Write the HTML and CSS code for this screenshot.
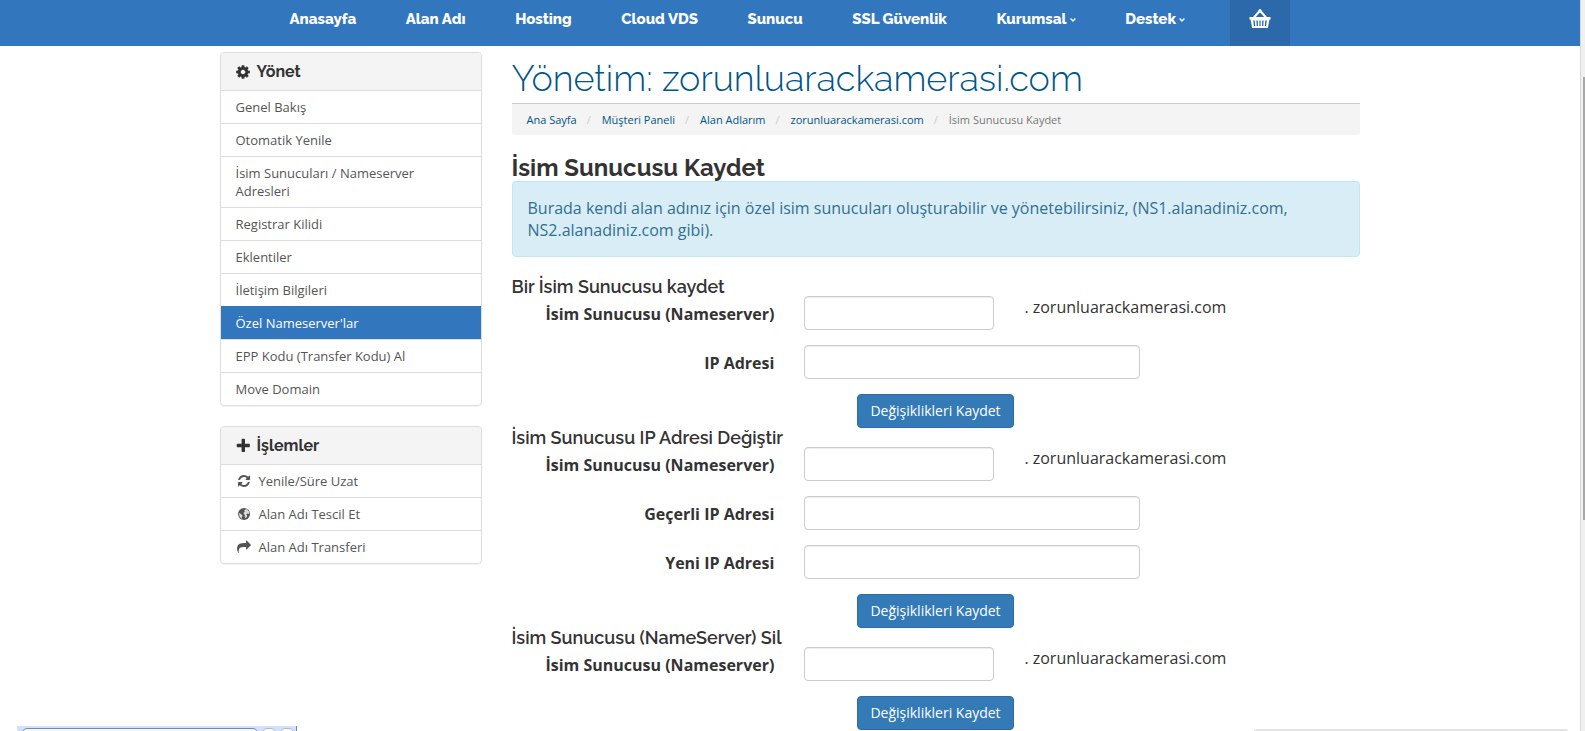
FILE: index.html
```html
<!DOCTYPE html>
<html lang="tr">
<head>
    <meta charset="UTF-8">
    <meta name="viewport" content="width=device-width, initial-scale=1.0">
    <title>İsim Sunucusu Kaydet</title>
    <link rel="stylesheet" href="styles.css">
</head>
<body>
    <header class="navbar">
        <div class="container navbar-container">
            <nav class="navbar-menu">
                <a href="#">Anasayfa</a>
                <a href="#">Alan Adı</a>
                <a href="#">Hosting</a>
                <a href="#">Cloud VDS</a>
                <a href="#">Sunucu</a>
                <a href="#">SSL Güvenlik</a>
                <a href="#">Kurumsal <svg class="caret" viewBox="0 0 6 4"><path d="M.6 .6L3 3l2.400-2.400"/></svg></a>
                <a href="#">Destek <svg class="caret" viewBox="0 0 6 4"><path d="M.6 .6L3 3l2.400-2.400"/></svg></a>
            </nav>
            <a href="#" class="navbar-cart" aria-label="Sepet">
                <svg viewBox="0 0 22 20">
                    <path d="M5 8.500L11 1.500l6 7" fill="none" stroke="#fff" stroke-width="2"/>
                    <circle cx="11" cy="2" r="1.700"/>
                    <path fill-rule="evenodd" d="M0.500 8h21v2.400h-1l-1.700 8.600H3.200L1.500 10.400h-1zM4.200 11.500l.8 5.500h1.200l-.5-5.500zM7.400 11.500l.3 5.500h1.300l-.2-5.500zM10.400 11.500v5.500h1.200v-5.500zM13.200 11.500l-.2 5.500h1.300l.3-5.500zM16.300 11.500l-.5 5.500H17l.8-5.500z"/>
                </svg>
            </a>
        </div>
    </header>

    <div class="page">
        <div class="container content">
            <aside class="sidebar">
                <div class="panel">
                    <h3 class="panel-heading">
                        <svg class="icon" viewBox="0 0 1792 1792"><path d="M1152 896q0-106-75-181t-181-75-181 75-75 181 75 181 181 75 181-75 75-181zm512-109v222q0 12-8 23t-20 13l-185 28q-19 54-39 91 35 50 107 138 10 12 10 25t-9 23q-27 37-99 108t-94 71q-12 0-26-9l-138-108q-44 23-91 38-16 136-29 186-7 28-36 28h-222q-14 0-24.500-8.500t-11.500-21.500l-28-184q-49-16-90-37l-141 107q-10 9-25 9-14 0-25-11-126-114-165-168-7-10-7-23 0-12 8-23 15-21 51-66.500t54-70.500q-27-50-41-99l-183-27q-13-2-21-12.500t-8-23.500v-222q0-12 8-23t19-13l186-28q14-46 39-92-40-57-107-138-10-12-10-24 0-10 9-23 26-36 98.500-107.500t94.500-71.500q13 0 26 10l138 107q44-23 91-38 16-136 29-186 7-28 36-28h222q14 0 24.500 8.500t11.500 21.500l28 184q49 16 90 37l142-107q9-9 24-9 13 0 25 10 129 119 165 170 7 8 7 22 0 12-8 23-15 21-51 66.500t-54 70.500q26 50 41 98l183 28q13 2 21 12.500t8 23.500z"/></svg>
                        Yönet
                    </h3>
                    <a href="#">Genel Bakış</a>
                    <a href="#">Otomatik Yenile</a>
                    <a href="#">İsim Sunucuları / Nameserver Adresleri</a>
                    <a href="#">Registrar Kilidi</a>
                    <a href="#">Eklentiler</a>
                    <a href="#">İletişim Bilgileri</a>
                    <a href="#" class="active">Özel Nameserver'lar</a>
                    <a href="#">EPP Kodu (Transfer Kodu) Al</a>
                    <a href="#">Move Domain</a>
                </div>

                <div class="panel">
                    <h3 class="panel-heading">
                        <svg class="icon" viewBox="0 0 1792 1792"><path d="M1664 736v192q0 40-28 68t-68 28h-448v448q0 40-28 68t-68 28h-192q-40 0-68-28t-28-68v-448h-448q-40 0-68-28t-28-68v-192q0-40 28-68t68-28h448v-448q0-40 28-68t68-28h192q40 0 68 28t28 68v448h448q40 0 68 28t28 68z"/></svg>
                        İşlemler
                    </h3>
                    <a href="#">
                        <svg class="icon icon-fw" viewBox="0 0 1792 1792"><path d="M1639 1056q0 5-1 7-64 268-268 434.500t-478 166.500q-146 0-282.500-55t-243.500-157l-129 129q-19 19-45 19t-45-19-19-45v-448q0-26 19-45t45-19h448q26 0 45 19t19 45-19 45l-137 137q71 66 161 102t187 36q134 0 250-65t186-179q11-17 53-117 8-23 30-23h192q13 0 22.500 9.500t9.500 22.500zm25-800v448q0 26-19 45t-45 19h-448q-26 0-45-19t-19-45 19-45l138-138q-148-137-349-137-134 0-250 65t-186 179q-11 17-53 117-8 23-30 23h-199q-13 0-22.500-9.500t-9.500-22.500v-7q65-268 270-434.500t480-166.500q146 0 284 55.500t245 156.500l130-129q19-19 45-19t45 19 19 45z"/></svg>
                        Yenile/Süre Uzat
                    </a>
                    <a href="#">
                        <svg class="icon icon-fw" viewBox="0 0 14 14"><circle cx="7" cy="7" r="6"/><path class="land" d="M8 2.400l1.900-.2 1.700 1.700.7 2-.6 1.200-1.300-.6-1.200.9 1 1.200-.5 1.600-1.300 1-.7-1.600.2-1.500-1.300-1 .2-1.500 1.300-.8-1-.7zM2 6l1.500.8 1.500 1.100.6 1.100-.9 1.100.2 1.600-1.500-1-1.200-2.200z"/></svg>
                        Alan Adı Tescil Et
                    </a>
                    <a href="#">
                        <svg class="icon icon-fw" viewBox="0 0 1792 1792"><path d="M1792 640q0 26-19 45l-512 512q-19 19-45 19t-45-19-19-45v-256h-224q-98 0-175.500 6t-154 21.500-133 42.500-105.500 69.500-80 101-48.500 138.500-17.500 181q0 55 5 123 0 6 2.500 23.500t2.500 26.500q0 15-8.500 25t-23.500 10q-16 0-28-17-7-9-13-22t-13.500-30-10.500-24q-127-285-127-451 0-199 53-333 162-403 875-403h224v-256q0-26 19-45t45-19 45 19l512 512q19 19 19 45z"/></svg>
                        Alan Adı Transferi
                    </a>
                </div>
            </aside>

            <main class="main">
                <h1>Yönetim: zorunluarackamerasi.com</h1>
                <ol class="breadcrumb">
                    <li><a href="#">Ana Sayfa</a></li>
                    <li><a href="#">Müşteri Paneli</a></li>
                    <li><a href="#">Alan Adlarım</a></li>
                    <li><a href="#">zorunluarackamerasi.com</a></li>
                    <li>İsim Sunucusu Kaydet</li>
                </ol>

                <h2>İsim Sunucusu Kaydet</h2>
                <div class="alert">Burada kendi alan adınız için özel isim sunucuları oluşturabilir ve yönetebilirsiniz, (NS1.alanadiniz.com, NS2.alanadiniz.com gibi).</div>

                <form>
                    <h4>Bir İsim Sunucusu kaydet</h4>
                    <div class="form-group">
                        <label for="regNs">İsim Sunucusu (Nameserver)</label>
                        <input type="text" id="regNs" class="short">
                        <span>. zorunluarackamerasi.com</span>
                    </div>
                    <div class="form-group">
                        <label for="regIp">IP Adresi</label>
                        <input type="text" id="regIp">
                    </div>
                    <div class="form-actions">
                        <button type="submit" class="btn">Değişiklikleri Kaydet</button>
                    </div>
                </form>

                <form>
                    <h4>İsim Sunucusu IP Adresi Değiştir</h4>
                    <div class="form-group">
                        <label for="modNs">İsim Sunucusu (Nameserver)</label>
                        <input type="text" id="modNs" class="short">
                        <span>. zorunluarackamerasi.com</span>
                    </div>
                    <div class="form-group">
                        <label for="modIp">Geçerli IP Adresi</label>
                        <input type="text" id="modIp">
                    </div>
                    <div class="form-group">
                        <label for="newIp">Yeni IP Adresi</label>
                        <input type="text" id="newIp">
                    </div>
                    <div class="form-actions">
                        <button type="submit" class="btn">Değişiklikleri Kaydet</button>
                    </div>
                </form>

                <form>
                    <h4>İsim Sunucusu (NameServer) Sil</h4>
                    <div class="form-group">
                        <label for="delNs">İsim Sunucusu (Nameserver)</label>
                        <input type="text" id="delNs" class="short">
                        <span>. zorunluarackamerasi.com</span>
                    </div>
                    <div class="form-actions">
                        <button type="submit" class="btn">Değişiklikleri Kaydet</button>
                    </div>
                </form>
            </main>
        </div>
    </div>

    <div class="scrollbar"><div class="scrollbar-thumb"></div></div>

    <!-- tops of the bars docked below the window -->
    <div class="dock-left">
        <div class="dock-field"></div>
        <div class="dock-button"></div>
        <div class="dock-button"></div>
    </div>
    <div class="dock-right"></div>
</body>
</html>
```
FILE: styles.css
```css
:root {
    --primary: #3276be;
    --primary-dark: #2c69aa;
    --link: #058;
    --text: #333;
    --border: #ddd;
    --light: #f4f4f4;
    --heading-font: Raleway, Lato, sans-serif;
}

* {
    box-sizing: border-box;
}

html {
    overflow: hidden;
}

body {
    margin: 0;
    font-family: "Open Sans", sans-serif;
    font-size: 16px;
    line-height: 22px;
    color: var(--text);
    background: #fff;
}

a {
    text-decoration: none;
}

.container {
    max-width: 1170px;
    margin: 0 auto;
    padding: 0 15px;
}

/* Navbar */
.navbar {
    padding-right: 6px;
    background: var(--primary);
}

.navbar-container {
    display: flex;
    height: 46px;
    padding: 0 85px;
}

.navbar-menu {
    flex: 1;
    display: flex;
    justify-content: space-between;
    padding: 8px 44px 0 0;
}

.navbar-menu a {
    font-family: var(--heading-font);
    font-size: 15px;
    font-weight: 800;
    color: #fff;
    white-space: nowrap;
}

.caret {
    width: 6px;
    height: 4px;
    vertical-align: middle;
    fill: none;
    stroke: #fff;
    stroke-width: 1.4;
}

.navbar-cart {
    width: 60px;
    padding-top: 9px;
    text-align: center;
    background: var(--primary-dark);
}

.navbar-cart svg {
    width: 22px;
    height: 20px;
    fill: #fff;
}

/* Layout */
.page {
    padding-right: 6px;
}

.content {
    display: flex;
    gap: 30px;
}

.sidebar {
    flex: 0 0 262px;
    padding-top: 6px;
}

.main {
    flex: 1;
    min-width: 0;
    padding-top: 10px;
}

/* Sidebar panels */
.panel {
    margin-bottom: 20px;
    border: 1px solid var(--border);
    border-radius: 4px;
    box-shadow: 0 1px 1px rgba(0, 0, 0, 0.05);
    overflow: hidden;
}

.panel-heading {
    display: flex;
    align-items: center;
    gap: 6px;
    margin: 0;
    padding: 0 14px;
    font-family: var(--heading-font);
    font-size: 16px;
    font-weight: 700;
    line-height: 37px;
    background: var(--light);
}

.panel a {
    display: flex;
    align-items: center;
    padding: 7px 15px;
    border-top: 1px solid var(--border);
    font-size: 13px;
    line-height: 18px;
    color: #555;
}

.panel a.active {
    color: #fff;
    background: var(--primary);
    border-color: var(--primary);
}

.icon {
    flex: none;
    width: 16px;
    height: 16px;
    fill: currentColor;
}

.icon-fw {
    width: 14px;
    height: 14px;
    margin: 0 8px 0 1px;
}

.icon .land {
    fill: #fff;
    opacity: 0.8;
}

/* Headings */
h1,
h2,
h4 {
    margin: 0;
    font-family: var(--heading-font);
}

h1 {
    margin-bottom: 3px;
    font-size: 36px;
    font-weight: 300;
    line-height: 44px;
    color: var(--link);
}

h2 {
    font-size: 24px;
    font-weight: 700;
    line-height: 26px;
}

h4 {
    font-size: 18px;
    font-weight: 600;
    line-height: 19px;
}

.breadcrumb {
    display: flex;
    margin: 0 0 20px;
    padding: 8px 15px;
    list-style: none;
    font-size: 11px;
    line-height: 15px;
    color: #777;
    background: var(--light);
    border-top: 1px solid #ccc;
    border-radius: 0 0 3px 3px;
}

.breadcrumb li + li::before {
    content: "/";
    padding: 0 11px 0 10px;
    color: #ccc;
}

.breadcrumb a {
    color: var(--link);
}

.alert {
    margin-bottom: 20px;
    padding: 15px;
    color: #31708f;
    background: #d9edf7;
    border: 1px solid #bce8f1;
    border-radius: 4px;
}

/* Forms */
.form-group {
    display: flex;
    gap: 30px;
    margin-bottom: 15px;
}

.form-group label {
    width: 31%;
    padding-top: 7px;
    font-weight: 700;
    text-align: right;
}

.form-group input {
    width: 336px;
    height: 34px;
    padding: 6px 12px;
    font: inherit;
    border: 1px solid #ccc;
    border-radius: 4px;
    box-shadow: inset 0 1px 1px rgba(0, 0, 0, 0.075);
}

.form-group input.short {
    width: 190px;
}

.form-actions {
    text-align: center;
}

.btn {
    display: inline-block;
    height: 34px;
    padding: 6px 12px;
    font-family: inherit;
    font-size: 14px;
    line-height: 20px;
    vertical-align: top;
    color: #fff;
    background: #337ab7;
    border: 1px solid #2e6da4;
    border-radius: 4px;
    cursor: pointer;
}

/* Window edges */
.scrollbar {
    position: fixed;
    top: 0;
    right: 0;
    bottom: 0;
    width: 5px;
    padding: 77px 0 0 2px;
    background: #f0f0f0;
    border-left: 1px solid #d8d8d8;
}

.scrollbar-thumb {
    height: 443px;
    background: #a8a8a8;
}

.dock-left {
    position: fixed;
    left: 17px;
    bottom: 0;
    display: flex;
    gap: 4px;
    width: 280px;
    height: 5px;
    padding: 2px 2px 0 5px;
    background: #d3e1fb;
    border-right: 1px solid #6d83b8;
    overflow: hidden;
}

.dock-field {
    flex: 1;
    height: 12px;
    background: #f3f7ff;
    border: 1px solid #7288be;
    border-radius: 5px;
}

.dock-button {
    width: 14px;
    height: 12px;
    background: #fff;
    border: 1px solid #a9b7d8;
    border-radius: 5px;
}

.dock-right {
    position: fixed;
    right: 17px;
    bottom: 0;
    width: 314px;
    height: 2px;
    background: #e4e4e4;
    border-radius: 4px 4px 0 0;
}
```
